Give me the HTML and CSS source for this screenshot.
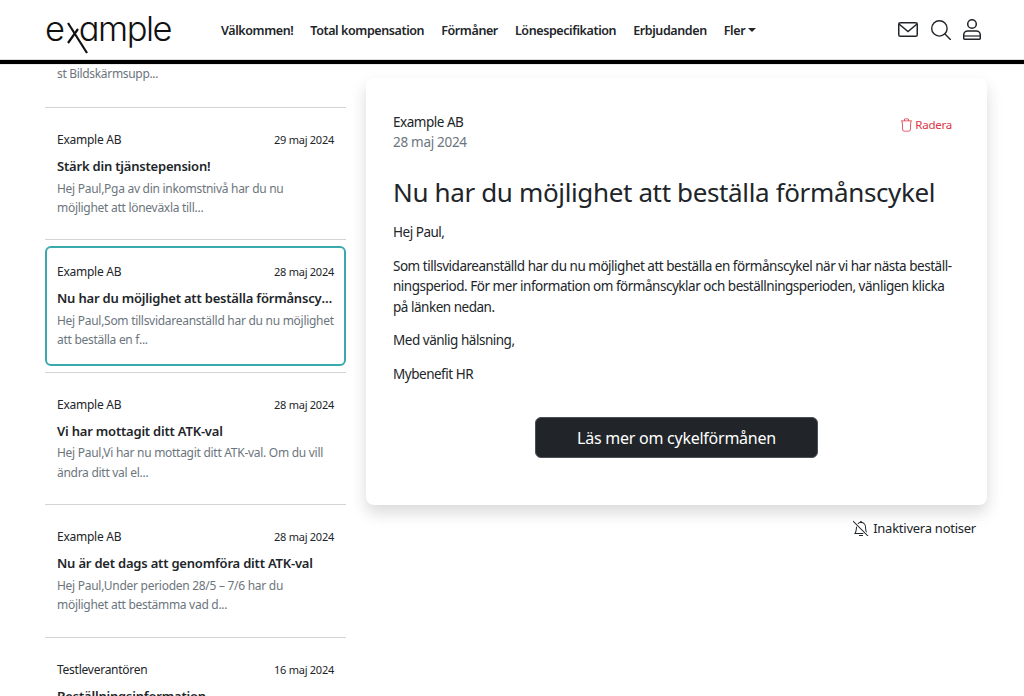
FILE: index.html
```html
<!DOCTYPE html>
<html lang="sv">
<head>
<meta charset="utf-8">
<title>Meddelanden</title>
<link rel="stylesheet" href="styles.css">
</head>
<body>
<header class="topbar">
  <a class="logo">
    <span class="logo-text">e<span class="logo-x">x</span>ample</span>
    <svg class="logo-mark" width="30" height="40" viewBox="0 0 30 40" fill="none" stroke="#111" stroke-width="2.200"><path d="M1 1 L20 31"/><path d="M1 21 L11 7"/></svg>
  </a>
  <nav class="nav">
    <a>Välkommen!</a>
    <a>Total kompensation</a>
    <a>Förmåner</a>
    <a>Lönespecifikation</a>
    <a>Erbjudanden</a>
    <a class="more">Fler<i class="caret"></i></a>
  </nav>
  <div class="tools">
    <svg class="tool" width="20" height="15" viewBox="0 0 20 15" fill="none" stroke="#212529" stroke-width="1.500"><rect x=".75" y=".75" width="18.500" height="13.500" rx="1.600"/><path d="M1 2l9 7.500L19 2"/></svg>
    <svg class="tool" width="20" height="20" viewBox="0 0 20 20" fill="none" stroke="#212529" stroke-width="1.400"><circle cx="8.400" cy="8.400" r="7.700"/><path d="M14 14l5.400 5.400" stroke-linecap="round"/></svg>
    <svg class="tool" width="18" height="21" viewBox="0 0 18 21" fill="none" stroke="#212529" stroke-width="1.500"><circle cx="9" cy="5" r="4.300"/><path d="M.7 19v-3c0-2.500 2-4 4-4h8.600c2 0 4 1.500 4 4v3c0 .8-.5 1.300-1.200 1.300H1.900C1.200 20.300.7 19.800.7 19z"/><path d="M1 17h16" stroke-width="1.200"/></svg>
  </div>
</header>
<div class="page">
  <aside class="list">
    <div class="stub">st Bildskärmsupp...</div>
    <article class="item">
      <div class="meta"><span>Example AB</span><time>29 maj 2024</time></div>
      <h3>Stärk din tjänstepension!</h3>
      <p>Hej Paul,Pga av din inkomstnivå har du nu möjlighet att löneväxla till...</p>
    </article>
    <article class="item active">
      <div class="meta"><span>Example AB</span><time>28 maj 2024</time></div>
      <h3>Nu har du möjlighet att beställa förmånscykel</h3>
      <p>Hej Paul,Som tillsvidareanställd har du nu möjlighet att beställa en f...</p>
    </article>
    <article class="item">
      <div class="meta"><span>Example AB</span><time>28 maj 2024</time></div>
      <h3>Vi har mottagit ditt ATK-val</h3>
      <p>Hej Paul,Vi har nu mottagit ditt ATK-val. Om du vill ändra ditt val el...</p>
    </article>
    <article class="item">
      <div class="meta"><span>Example AB</span><time>28 maj 2024</time></div>
      <h3>Nu är det dags att genomföra ditt ATK-val</h3>
      <p>Hej Paul,Under perioden 28/5 – 7/6 har du möjlighet att bestämma vad d...</p>
    </article>
    <article class="item">
      <div class="meta"><span>Testleverantören</span><time>16 maj 2024</time></div>
      <h3>Beställningsinformation</h3>
      <p>Hej Paul,</p>
    </article>
  </aside>
  <main class="detail">
    <section class="card">
      <div class="card-head">
        <div>
          <div class="sender">Example AB</div>
          <div class="sent">28 maj 2024</div>
        </div>
        <a class="delete">
          <svg width="13" height="14" viewBox="0 0 16 16" fill="currentColor"><path d="M6.500 1h3a.5.5 0 0 1 .5.5v1H6v-1a.5.5 0 0 1 .5-.5ZM11 2.500v-1A1.500 1.500 0 0 0 9.500 0h-3A1.500 1.500 0 0 0 5 1.500v1H2.506a.58.58 0 0 0-.01 0H1.500a.5.5 0 0 0 0 1h.538l.853 10.660A2 2 0 0 0 4.885 16h6.230a2 2 0 0 0 1.994-1.840l.853-10.660h.538a.5.5 0 0 0 0-1h-.995a.59.59 0 0 0-.01 0H11Zm1.958 1-.846 10.580a1 1 0 0 1-.997.92h-6.230a1 1 0 0 1-.997-.92L3.042 3.500h9.916Z"/></svg>
          Radera
        </a>
      </div>
      <h1>Nu har du möjlighet att beställa förmånscykel</h1>
      <p>Hej Paul,</p>
      <p class="body-text">Som tillsvidareanställd har du nu möjlighet att beställa en förmånscykel när vi har nästa beställ-<br>ningsperiod. För mer information om förmånscyklar och beställningsperioden, vänligen klicka<br>på länken nedan.</p>
      <p>Med vänlig hälsning,</p>
      <p>Mybenefit HR</p>
      <div class="cta-row"><a class="cta">Läs mer om cykelförmånen</a></div>
    </section>
    <a class="mute">
      <svg class="bell" width="16" height="16" viewBox="0 0 16 16" fill="currentColor"><path d="M5.164 14H15c-.299-.199-.557-.553-.78-1-.9-1.800-1.220-5.120-1.220-6 0-.264-.02-.523-.06-.776l-.938.938c.02.708.157 2.154.457 3.580.161.767.377 1.566.663 2.258H6.164l-1 1zm5.581-9.910a3.986 3.986 0 0 0-1.948-1.010L8 2.917l-.797.161A4.002 4.002 0 0 0 4 7c0 .628-.134 2.197-.459 3.742-.05.238-.105.479-.166.718l-1.653 1.653c.02-.037.04-.074.059-.113C2.679 11.200 3 7.880 3 7c0-2.420 1.720-4.440 4.005-4.901a1 1 0 1 1 1.990 0c.942.19 1.788.645 2.457 1.284l-.707.707zM10 15a2 2 0 1 1-4 0h4zm-9.375.625a.53.53 0 0 0 .75.75l14.750-14.750a.53.53 0 0 0-.75-.75L.625 15.625z"/></svg>
      Inaktivera notiser
    </a>
  </main>
</div>
</body>
</html>
```
FILE: styles.css
```css
* { box-sizing: border-box; }
html, body { margin: 0; height: 696px; overflow: hidden; background: #fff; }
body {
  font-family: "Noto Sans", "Open Sans", "Liberation Sans", sans-serif;
  font-size: 14px;
  color: #212529;
  letter-spacing: -0.25px;
}
.topbar {
  display: flex;
  align-items: center;
  height: 64px;
  padding: 0 43px 0 45px;
  background: #fff;
  border-bottom: 4px solid #000;
  box-shadow: inset 0 -1px 0 #dcdcdc, 0 1px 0 #ececec;
}
.logo { position: relative; display: block; width: 126px; height: 46px; margin-top: -3px; }
.logo-text {
  font-family: "Inter", sans-serif;
  font-feature-settings: "cv11";
  font-weight: 300;
  font-size: 34.500px;
  letter-spacing: -1.500px;
  line-height: 46px;
  color: #111;
}
.logo-x { color: transparent; }
.logo-mark { position: absolute; left: 22px; top: 16px; }
.nav { display: flex; gap: 17px; margin-left: 50px; font-size: 12.500px; font-weight: 600; letter-spacing: -0.4px; padding-top: 1px; }
.more { display: flex; align-items: center; }
.caret {
  display: inline-block;
  margin-left: 3px;
  margin-top: -2px;
  border-top: 4px solid #212529;
  border-left: 4px solid transparent;
  border-right: 4px solid transparent;
}
.tools { display: flex; align-items: center; gap: 12.500px; margin-left: auto; margin-top: -1px; }
.page { display: flex; height: 632px; overflow: hidden; padding-left: 45px; }
.list { width: 301px; flex: none; }
.stub { height: 44px; padding: 0 12px; border-bottom: 1px solid #d3d4d5; color: #6c757d; font-size: 12px; line-height: 20px; letter-spacing: -0.32px; }
.item {
  height: 132.400px;
  padding: 24px 12px 0;
  border-bottom: 1px solid #d3d4d5;
  position: relative;
}
.meta { display: flex; justify-content: space-between; align-items: baseline; font-size: 12px; line-height: 16px; }
.meta time { font-size: 11px; }
.item h3 { margin: 8px 0 0; font-size: 13px; line-height: 20px; font-weight: 600; letter-spacing: -0.2px; white-space: nowrap; overflow: hidden; text-overflow: ellipsis; }
.item p { margin: 2.500px 0 0; font-size: 12px; line-height: 19.500px; color: #6c757d; letter-spacing: -0.28px; }
.item.active::before {
  content: "";
  position: absolute;
  left: 0; right: 0; top: 6px; bottom: 6px;
  border: 2px solid #3aa9ad;
  border-radius: 6px;
}
.detail { width: 621px; margin-left: 20px; padding-top: 14px; display: flex; flex-direction: column; }
.card {
  height: 427px;
  padding: 34px 27px 0;
  background: #fff;
  border-radius: 8px;
  box-shadow: 0 8px 16px rgba(0,0,0,.15);
  font-size: 13.500px;
  line-height: 20.500px;
  letter-spacing: -0.48px;
}
.card-head { display: flex; justify-content: space-between; align-items: flex-start; }
.sender { line-height: 20px; }
.sent { color: #6c757d; line-height: 20px; letter-spacing: -0.3px; }
.delete { display: flex; align-items: center; gap: 2px; margin: 3px 8px 0 0; color: #dc3545; font-size: 11.500px; line-height: 20px; letter-spacing: -0.25px; }
.card h1 { margin: 24px 0 14px; font-size: 26px; line-height: 32px; font-weight: 400; letter-spacing: -0.36px; }
.card p { margin: 0 0 13px; }
.body-text { white-space: nowrap; }
.cta-row { display: flex; justify-content: center; margin-top: 32.500px; }
.cta {
  display: block;
  width: 283px;
  height: 41px;
  padding: 10px 0;
  background: #212529;
  border: 1px solid #495057;
  border-radius: 6px;
  color: #fff;
  font-size: 16px;
  line-height: 20px;
  letter-spacing: -0.25px;
  text-align: center;
}
.mute { display: flex; align-items: center; justify-content: flex-end; gap: 4px; margin: 13px 11px 0 0; font-size: 13px; line-height: 20px; }
.bell { transform: scaleX(-1); }
```
